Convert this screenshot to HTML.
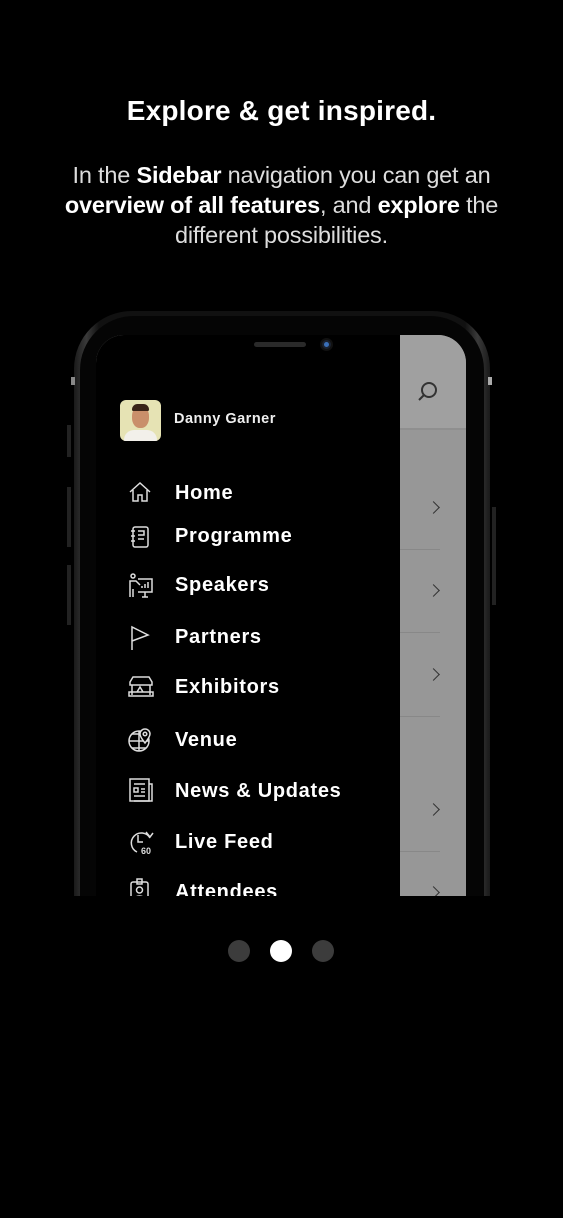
<!DOCTYPE html>
<html><head><meta charset="utf-8"><style>
*{margin:0;padding:0;box-sizing:border-box}
html,body{width:563px;height:1218px;background:#000;overflow:hidden;font-family:"Liberation Sans",sans-serif;color:#fff}
h1{position:absolute;top:95px;left:0;width:563px;text-align:center;font-size:28px;font-weight:bold;letter-spacing:0.2px}
.p{position:absolute;top:160px;left:0;width:563px;text-align:center;font-size:23.5px;line-height:30px;font-weight:400;color:#ddd;letter-spacing:-0.2px}
.p b{color:#fff;font-weight:700}
.frame{position:absolute;left:74px;top:311px;width:416px;height:700px;border-radius:58px;background:linear-gradient(90deg,#1a1a1a,#3a3a3a 3%,#111 6%,#111 94%,#3a3a3a 97%,#1a1a1a);}
.frame2{position:absolute;left:80px;top:316px;width:404px;height:700px;border-radius:54px;background:#050505}
.screen{position:absolute;left:96px;top:335px;width:370px;height:700px;border-radius:28px 28px 0 0;overflow:hidden;background:#979797}
.cut{position:absolute;left:0;top:896px;width:563px;height:322px;background:#000}
.drawer{position:absolute;left:0;top:0;width:304px;height:700px;background:#000}
.hdr{position:absolute;left:304px;top:0;width:66px;height:95px;background:#a0a0a0;border-bottom:2px solid #8f8f8f}
.line{position:absolute;left:304px;width:40px;height:1px;background:#888}
.chev{position:absolute;left:333px;width:9px;height:9px;border-right:1.6px solid #333;border-top:1.6px solid #333;transform:rotate(45deg)}
.item{position:absolute;left:79px;font-size:20px;font-weight:bold;letter-spacing:0.7px}
.ic{position:absolute;left:32px}
.btn{position:absolute;background:#777;width:4px}
</style></head><body>
<h1>Explore &amp; get inspired.</h1>
<div class="p">In the <b>Sidebar</b> navigation you can get an<br><b>overview of all features</b>, and <b>explore</b> the<br>different possibilities.</div>
<div class="frame"></div>
<div class="frame2"></div>
<div class="btn" style="left:71px;top:377px;height:8px;background:#888"></div>
<div class="btn" style="left:488px;top:377px;height:8px;background:#aaa"></div>
<div class="btn" style="left:67px;top:425px;height:32px;background:#222"></div>
<div class="btn" style="left:67px;top:487px;height:60px;background:#222"></div>
<div class="btn" style="left:67px;top:565px;height:60px;background:#222"></div>
<div class="btn" style="left:492px;top:507px;height:98px;background:#222"></div>
<div class="screen">
 <div class="hdr"></div>
 <svg style="position:absolute;left:320px;top:45px" width="24" height="24" viewBox="0 0 24 24"><circle cx="13" cy="10" r="7" fill="none" stroke="#333" stroke-width="2"/><path d="M8 15L3 20" stroke="#333" stroke-width="2"/></svg>
 <div class="line" style="top:214px"></div><div class="line" style="top:297px"></div><div class="line" style="top:381px"></div><div class="line" style="top:516px"></div>
 <div class="chev" style="top:168px"></div><div class="chev" style="top:251px"></div><div class="chev" style="top:335px"></div><div class="chev" style="top:470px"></div><div class="chev" style="top:553px"></div>
 <div class="drawer">
  <div style="position:absolute;left:82px;top:0;width:200px;height:28px;background:#000;border-radius:0 0 14px 14px"></div>
  <div style="position:absolute;left:158px;top:7px;width:52px;height:5px;border-radius:3px;background:#2a2a2a"></div>
  <div style="position:absolute;left:224px;top:3px;width:13px;height:13px;border-radius:50%;background:#1a2230;border:2px solid #111"><div style="margin:2px;width:5px;height:5px;border-radius:50%;background:#3a6fb8"></div></div>
  <div style="position:absolute;left:24px;top:65px;width:41px;height:41px;border-radius:6px;background:#e6e3b4;overflow:hidden">
   <div style="position:absolute;left:12px;top:6px;width:17px;height:22px;border-radius:45%;background:#c98f6a"></div>
   <div style="position:absolute;left:12px;top:4px;width:17px;height:7px;border-radius:8px 8px 2px 2px;background:#3a2418"></div>
   <div style="position:absolute;left:4px;top:30px;width:33px;height:14px;border-radius:10px 10px 0 0;background:#f2f0ea"></div>
  </div>
  <div style="position:absolute;left:78px;top:76px;font-size:14.5px;font-weight:bold;letter-spacing:0.5px;color:#eee">Danny Garner</div>
  <div class="item" style="top:147px">Home</div>
  <div class="item" style="top:190px">Programme</div>
  <div class="item" style="top:239px">Speakers</div>
  <div class="item" style="top:291px">Partners</div>
  <div class="item" style="top:341px">Exhibitors</div>
  <div class="item" style="top:394px">Venue</div>
  <div class="item" style="top:445px">News &amp; Updates</div>
  <div class="item" style="top:496px">Live Feed</div>
  <div class="item" style="top:546px">Attendees</div>
  <svg class="ic" style="top:145px" width="24" height="24" viewBox="0 0 24 24" fill="none" stroke="#ddd" stroke-width="1.5"><path d="M2 12L12 3l10 9M5 10v11h5v-6h4v6h5V10"/></svg>
  <svg class="ic" style="top:190px" width="24" height="24" viewBox="0 0 24 24" fill="none" stroke="#ddd" stroke-width="1.5"><rect x="5" y="2" width="15" height="20" rx="2"/><path d="M3 6h4M3 11h4M3 16h4M10 6h6v4h-6M10 14h6"/></svg>
  <svg class="ic" style="top:238px" width="26" height="26" viewBox="0 0 26 26" fill="none" stroke="#ddd" stroke-width="1.5"><circle cx="5" cy="3" r="2"/><path d="M2 24V8h6l4 4M5 24v-8M10 6h14v13H10M17 19v5M14 24h6M14 15v-2M17 15v-4M20 15v-6"/></svg>
  <svg class="ic" style="top:290px" width="24" height="26" viewBox="0 0 24 26" fill="none" stroke="#ddd" stroke-width="1.5"><path d="M4 25V2l16 8-16 6"/></svg>
  <svg class="ic" style="top:340px" width="26" height="24" viewBox="0 0 26 24" fill="none" stroke="#ddd" stroke-width="1.5"><path d="M2 7L5 2h16l3 5v3H2zM4 10v10M22 10v10M1 17h24v4H1zM9 17l3-5 3 5"/></svg>
  <svg class="ic" style="top:392px" width="26" height="26" viewBox="0 0 26 26" fill="none" stroke="#ddd" stroke-width="1.5"><circle cx="11" cy="14" r="10"/><path d="M1 14h20M11 4v20M4 7h8M4 21h14"/><path d="M17 16c-4-5-5-7-5-9a5 5 0 0110 0c0 2-1 4-5 9z" fill="#000"/><circle cx="17" cy="7" r="1.8"/></svg>
  <svg class="ic" style="top:442px" width="26" height="26" viewBox="0 0 26 26" fill="none" stroke="#ddd" stroke-width="1.5"><rect x="2" y="2" width="19" height="22"/><path d="M21 7h3v17H6M6 7h11M6 11h4v4H6zM13 12h4M13 15h4M6 19h11"/></svg>
  <svg class="ic" style="top:494px" width="26" height="26" viewBox="0 0 26 26" fill="none" stroke="#ddd" stroke-width="1.5"><path d="M22 9A10 10 0 109 23M10 6v7h5M18 3l4 5 3-4"/><text x="13" y="25" font-size="9" font-weight="bold" fill="#ddd" stroke="none" font-family="Liberation Sans">60</text></svg>
  <svg class="ic" style="top:543px" width="24" height="26" viewBox="0 0 24 26" fill="none" stroke="#ddd" stroke-width="1.5"><rect x="3" y="4" width="17" height="21" rx="2"/><rect x="9" y="1" width="5" height="5"/><circle cx="11.5" cy="12" r="3"/><path d="M6 21c1-4 10-4 11 0"/></svg>
 </div>
</div>
<div class="cut"></div>
<div style="position:absolute;left:228px;top:940px;width:22px;height:22px;border-radius:50%;background:#3c3c3c"></div>
<div style="position:absolute;left:270px;top:940px;width:22px;height:22px;border-radius:50%;background:#fff"></div>
<div style="position:absolute;left:312px;top:940px;width:22px;height:22px;border-radius:50%;background:#3c3c3c"></div>
</body></html>
